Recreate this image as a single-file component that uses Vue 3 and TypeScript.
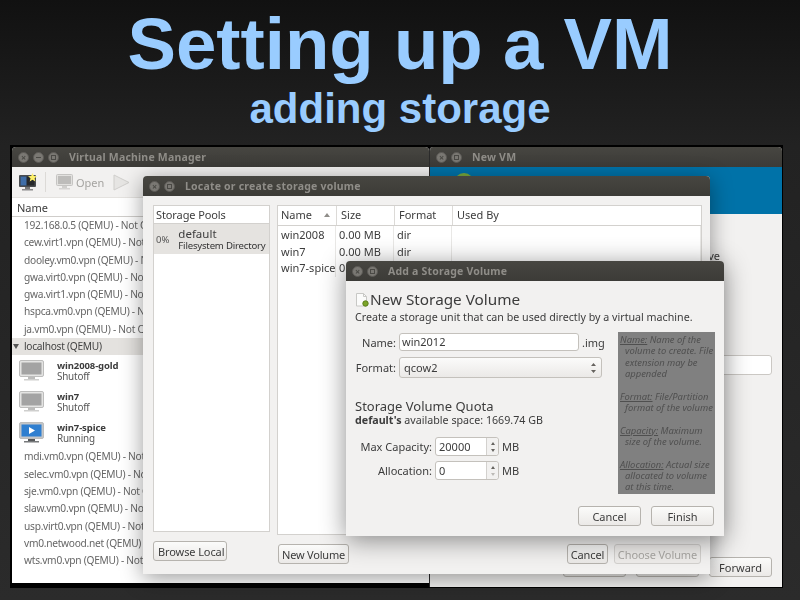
<script setup lang="ts">
interface Vm {
  name: string
  status: string
  running?: boolean
}

const hostsTop = [
  '192.168.0.5 (QEMU) - Not Connected',
  'cew.virt1.vpn (QEMU) - Not Connected',
  'dooley.vm0.vpn (QEMU) - Not Connected',
  'gwa.virt0.vpn (QEMU) - Not Connected',
  'gwa.virt1.vpn (QEMU) - Not Connected',
  'hspca.vm0.vpn (QEMU) - Not Connected',
  'ja.vm0.vpn (QEMU) - Not Connected',
]

const vms: Vm[] = [
  { name: 'win2008-gold', status: 'Shutoff' },
  { name: 'win7', status: 'Shutoff' },
  { name: 'win7-spice', status: 'Running', running: true },
]

const hostsBottom = [
  'mdi.vm0.vpn (QEMU) - Not Connected',
  'selec.vm0.vpn (QEMU) - Not Connected',
  'sje.vm0.vpn (QEMU) - Not Connected',
  'slaw.vm0.vpn (QEMU) - Not Connected',
  'usp.virt0.vpn (QEMU) - Not Connected',
  'vm0.netwood.net (QEMU) - Not Connected',
  'wts.vm0.vpn (QEMU) - Not Connected',
]

const volumes = [
  { name: 'win2008', size: '0.00 MB', format: 'dir' },
  { name: 'win7', size: '0.00 MB', format: 'dir' },
  { name: 'win7-spice', size: '0.00 MB', format: 'dir' },
]

const helpBlocks = [
  { label: 'Name', lines: [' Name of the', 'volume to create. File', 'extension may be', 'appended'] },
  { label: 'Format', lines: [' File/Partition', 'format of the volume'] },
  { label: 'Capacity', lines: [' Maximum', 'size of the volume.'] },
  { label: 'Allocation', lines: [' Actual size', 'allocated to volume', 'at this time.'] },
]
</script>

<template>
  <div class="slide">
    <header class="heading">
      <h1>Setting up a VM</h1>
      <h2>adding storage</h2>
    </header>

    <div class="desktop">
      <!-- main manager window -->
      <section class="win manager">
        <div class="titlebar">
          <span class="dot close"></span><span class="dot min"></span><span class="dot max"></span>
          <span class="wintitle">Virtual Machine Manager</span>
        </div>
        <div class="toolbar">
          <svg class="tool-new" width="20" height="18" viewBox="0 0 20 18">
            <rect x="1" y="2" width="17" height="12" rx="1" fill="#4a4d50" />
            <rect x="2.5" y="3.5" width="14" height="9" fill="#26282b" />
            <rect x="2.5" y="3.5" width="6" height="9" fill="#3f6ea8" />
            <rect x="7" y="14" width="5" height="2" fill="#777" />
            <rect x="4" y="16" width="11" height="1.5" fill="#8a8a8a" />
            <path d="M14.5 0l1.4 3 3.1.3-2.4 2 .8 3.1-2.9-1.7-2.8 1.7.8-3.1-2.4-2 3.1-.3z" fill="#fdf06a" />
          </svg>
          <span class="tool-sep"></span>
          <svg class="tool-open" width="17" height="16" viewBox="0 0 17 16">
            <rect x="0.5" y="0.5" width="16" height="11" rx="1" fill="#e2e1df" stroke="#c5c4c2" />
            <rect x="2" y="2" width="13" height="8" fill="#bdbcba" />
            <rect x="6" y="12" width="5" height="2" fill="#cfcecc" />
            <rect x="3" y="14" width="11" height="1.5" fill="#d5d4d2" />
          </svg>
          <span class="tool-label">Open</span>
          <svg class="tool-play" width="17" height="17" viewBox="0 0 17 17">
            <path d="M1 1l15 7.5L1 16z" fill="#e6e5e3" stroke="#cfcecb" />
          </svg>
        </div>
        <div class="list-head">Name</div>
        <div class="list">
          <div v-for="h in hostsTop" :key="h" class="host">{{ h }}</div>
          <div class="group"><span class="arrow"></span>localhost (QEMU)</div>
          <div v-for="vm in vms" :key="vm.name" class="vm">
            <svg width="25" height="21" viewBox="0 0 25 21">
              <rect x="0.5" y="0.5" width="24" height="16" rx="1.5" :fill="vm.running ? '#c4c6c8' : '#e4e4e3'" stroke="#bdbdbc" />
              <rect x="2.5" y="2.5" width="20" height="12" :fill="vm.running ? '#2f7fd0' : '#a3a3a3'" />
              <path v-if="vm.running" d="M10 5l6 3.5-6 3.5z" fill="#fff" />
              <rect x="9" y="17" width="7" height="2" :fill="vm.running ? '#55585a' : '#bcbcbb'" />
              <rect x="5" y="19" width="15" height="1.5" :fill="vm.running ? '#77797b' : '#cfcfce'" />
            </svg>
            <div class="vm-text">
              <div class="vm-name">{{ vm.name }}</div>
              <div class="vm-status">{{ vm.status }}</div>
            </div>
          </div>
          <div v-for="h in hostsBottom" :key="h" class="host">{{ h }}</div>
        </div>
      </section>

      <!-- new vm wizard behind the dialogs -->
      <section class="win newvm">
        <div class="titlebar">
          <span class="dot close"></span><span class="dot max"></span>
          <span class="wintitle">New VM</span>
        </div>
        <div class="banner">
          <span class="banner-icon"></span>
          <span class="banner-text">Create a new virtual machine</span>
        </div>
        <div class="newvm-body">
          <div class="newvm-line">Create a disk image on the computer's hard drive</div>
          <div class="newvm-input"></div>
          <div class="newvm-foot">
            <button class="btn fw">Cancel</button>
            <button class="btn fw">Back</button>
            <button class="btn fw">Forward</button>
          </div>
        </div>
      </section>

      <!-- locate storage dialog -->
      <section class="win locate">
        <div class="titlebar">
          <span class="dot close"></span><span class="dot max"></span>
          <span class="wintitle">Locate or create storage volume</span>
        </div>
        <div class="locate-body">
          <div class="pool-col">
            <div class="panel pools">
              <div class="col-head pool-head">Storage Pools</div>
              <div class="pool-row">
                <span class="pct">0%</span>
                <div>
                  <div class="pool-name">default</div>
                  <div class="pool-type">Filesystem Directory</div>
                </div>
              </div>
            </div>
            <button class="btn browse">Browse Local</button>
          </div>
          <div class="vol-col">
            <div class="panel volumes">
              <div class="vol-grid vol-head">
                <div class="col-head">Name<span class="sort"></span></div>
                <div class="col-head">Size</div>
                <div class="col-head">Format</div>
                <div class="col-head">Used By</div>
              </div>
              <div v-for="v in volumes" :key="v.name" class="vol-grid vol-row">
                <div>{{ v.name }}</div>
                <div>{{ v.size }}</div>
                <div>{{ v.format }}</div>
                <div></div>
              </div>
            </div>
            <div class="vol-foot">
              <button class="btn new-vol">New Volume</button>
              <span class="spacer"></span>
              <button class="btn cancel-vol">Cancel</button>
              <button class="btn choose-vol" disabled>Choose Volume</button>
            </div>
          </div>
        </div>
      </section>

      <!-- add volume dialog -->
      <section class="win addvol">
        <div class="titlebar">
          <span class="dot close"></span><span class="dot max"></span>
          <span class="wintitle">Add a Storage Volume</span>
        </div>
        <div class="add-body">
          <div class="add-main">
            <div class="add-title">
              <svg width="14" height="14" viewBox="0 0 14 14">
                <path d="M1.5.5h7l3 3v9.500h-10z" fill="#fbfbfa" stroke="#c8c8c5" />
                <path d="M8.500.5v3h3" fill="none" stroke="#c8c8c5" />
                <circle cx="10.500" cy="10.500" r="2.700" fill="#7ba428" stroke="#5c7f1c" />
              </svg>
              <span>New Storage Volume</span>
            </div>
            <p class="add-sub">Create a storage unit that can be used directly by a virtual machine.</p>
            <div class="form-row name-row">
              <label class="lbl">Name:</label>
              <div class="field name-field">win2012</div>
              <span>.img</span>
            </div>
            <div class="form-row format-row">
              <label class="lbl">Format:</label>
              <div class="combo">
                qcow2
                <svg width="7" height="12" viewBox="0 0 7 12"><path d="M3.500 1l2.500 3H1zM3.500 11L1 8h5z" fill="#66635f" /></svg>
              </div>
            </div>
            <h3 class="quota">Storage Volume Quota</h3>
            <p class="avail"><b>default's</b> available space: 1669.74 GB</p>
            <div class="form-row spin-row first">
              <label class="lbl wide">Max Capacity:</label>
              <div class="spin"><span class="spin-val">20000</span><span class="spin-btn"><i class="up"></i><i class="down"></i></span></div>
              <span>MB</span>
            </div>
            <div class="form-row spin-row">
              <label class="lbl wide">Allocation:</label>
              <div class="spin"><span class="spin-val">0</span><span class="spin-btn"><i class="up"></i><i class="down off"></i></span></div>
              <span>MB</span>
            </div>
          </div>
          <aside class="help">
            <div v-for="b in helpBlocks" :key="b.label" class="help-block">
              <div v-for="(line, i) in b.lines" :key="line" :class="{ indent: i > 0 }">
                <template v-if="i === 0"><u>{{ b.label }}:</u>{{ line }}</template>
                <template v-else>{{ line }}</template>
              </div>
            </div>
          </aside>
        </div>
        <div class="add-foot">
          <button class="btn fw">Cancel</button>
          <button class="btn fw">Finish</button>
        </div>
      </section>
    </div>
  </div>
</template>

<style scoped>
.slide {
  width: 800px;
  height: 600px;
  overflow: hidden;
  background: linear-gradient(#111111, #222222 145px, #2b2b2b);
  font-family: "Noto Sans", "Open Sans", sans-serif;
}

.heading {
  height: 145px;
  text-align: center;
  color: #99ccff;
  font-family: "Liberation Sans", Arial, sans-serif;
  font-weight: bold;
}

.heading h1 {
  margin: 0;
  padding-top: 2px;
  font-size: 72.7px;
  line-height: 84px;
}

.heading h2 {
  margin: 0;
  font-size: 42px;
  line-height: 46px;
}

.desktop {
  position: relative;
  margin-left: 10px;
  width: 773px;
  height: 443px;
  background: #000;
  color: #3c3c3c;
  font-size: 11px;
  filter: blur(0.3px);
}

.win {
  position: absolute;
  display: flex;
  flex-direction: column;
  background: #f2f1f0;
  border-radius: 4px 4px 0 0;
  overflow: hidden;
}

.titlebar {
  flex: none;
  height: 20px;
  display: flex;
  align-items: center;
  gap: 4px;
  padding-left: 6px;
  background: linear-gradient(#474641, #3c3b37);
  font-weight: bold;
  color: #8f8d88;
}

.dot {
  position: relative;
  width: 9px;
  height: 9px;
  border-radius: 50%;
  background: #7a7873;
  border: 1px solid #5c5a56;
  box-sizing: content-box;
}

.dot::after {
  content: "";
  position: absolute;
  box-sizing: border-box;
}

.close::after {
  content: "×";
  left: 0;
  top: 0;
  width: 9px;
  line-height: 9px;
  text-align: center;
  font-size: 9px;
  color: #4a4945;
}

.min::after {
  left: 2px;
  top: 4px;
  width: 5px;
  height: 1px;
  background: #4a4945;
}

.max::after {
  left: 2px;
  top: 2px;
  width: 5px;
  height: 5px;
  border: 1px solid #4a4945;
}

.wintitle {
  margin-left: 6px;
  font-size: 10.5px;
  letter-spacing: 0.2px;
  white-space: nowrap;
}

/* manager */
.manager {
  left: 2px;
  top: 2px;
  width: 417px;
  height: 436px;
  background: #fff;
}

.toolbar {
  flex: none;
  height: 30px;
  display: flex;
  align-items: center;
  padding-left: 6px;
  background: #f2f1f0;
}

.tool-sep {
  width: 1px;
  height: 20px;
  background: #dcdad7;
  margin: 0 10px 0 7px;
}

.tool-label {
  margin: 0 9px 0 3px;
  color: #a5a4a1;
  font-size: 11px;
}

.list-head {
  flex: none;
  height: 20px;
  line-height: 19px;
  padding-left: 5px;
  font-size: 11px;
  background: #fff;
  border-top: 1px solid #e4e2df;
  border-bottom: 1px solid #cfcdca;
  box-sizing: border-box;
}

.host {
  height: 17.3px;
  line-height: 17.3px;
  padding-left: 12px;
  font-size: 10.2px;
  letter-spacing: -0.27px;
  color: #666;
  white-space: nowrap;
}

.group {
  height: 17.3px;
  line-height: 17.3px;
  display: flex;
  align-items: center;
  font-size: 10.2px;
  letter-spacing: -0.27px;
  background: #e4e2df;
  color: #444;
  padding-left: 1px;
}

.arrow {
  width: 0;
  height: 0;
  margin-right: 5px;
  border-left: 3px solid transparent;
  border-right: 3px solid transparent;
  border-top: 5px solid #555;
}

.vm {
  height: 31px;
  display: flex;
  align-items: center;
  padding-left: 7px;
}

.vm-text {
  margin-left: 13px;
  padding-top: 1px;
  white-space: nowrap;
}

.vm-name {
  font-size: 9.5px;
  letter-spacing: -0.1px;
  font-weight: bold;
  line-height: 11.5px;
  color: #3c3c3c;
}

.vm-status {
  font-size: 9.9px;
  letter-spacing: -0.2px;
  line-height: 11.5px;
  color: #555;
}

/* wizard */
.newvm {
  left: 419px;
  top: 2px;
  width: 353px;
  height: 440px;
  border-left: 1px solid #2b2b2b;
  box-sizing: border-box;
}

.banner {
  flex: none;
  height: 47px;
  display: flex;
  align-items: flex-start;
  gap: 7px;
  padding: 6px 0 0 24px;
  box-sizing: border-box;
  background: #0072a8;
  color: #fff;
}

.banner-icon {
  width: 20px;
  height: 20px;
  border-radius: 50%;
  background: #78a83c;
}

.banner-text {
  margin-top: 1px;
  font-size: 15px;
  line-height: 18px;
  white-space: nowrap;
}

.newvm-body {
  flex: 1;
  display: flex;
  flex-direction: column;
  padding: 0 10px 10px 0;
}

.newvm-line {
  margin-top: 34px;
  text-align: right;
  padding-right: 52px;
  height: 15px;
  white-space: nowrap;
}

.newvm-input {
  margin: 92px 0 0 200px;
  height: 20px;
  background: #fff;
  border: 1px solid #cbc8c4;
  border-radius: 3px;
  box-sizing: border-box;
}

.newvm-foot {
  margin-top: auto;
  display: flex;
  justify-content: flex-end;
  gap: 10px;
}

/* locate dialog */
.locate {
  left: 133px;
  top: 31px;
  width: 567px;
  height: 398px;
  box-shadow: 0 4px 22px rgba(0, 0, 0, 0.4);
}

.locate-body {
  flex: 1;
  display: flex;
  gap: 7px;
  padding: 9px 8px 0 10px;
}

.panel {
  background: #fff;
  border: 1px solid #d3d1ce;
  box-sizing: border-box;
}

.pool-col {
  width: 117px;
  flex: none;
}

.pools {
  height: 327px;
}

.col-head {
  height: 19px;
  line-height: 18px;
  font-size: 11px;
  padding-left: 3px;
  white-space: nowrap;
  position: relative;
}

.pool-head {
  border-bottom: 1px solid #d3d1ce;
  box-sizing: content-box;
  height: 17px;
  padding-left: 2px;
  letter-spacing: -0.1px;
}

.pool-row {
  display: flex;
  align-items: center;
  height: 30px;
  background: #e5e3e0;
  padding-left: 2px;
  gap: 9px;
}

.pct {
  font-size: 9.5px;
  color: #555;
}

.pool-name {
  font-size: 11.5px;
  line-height: 13px;
}

.pool-type {
  font-size: 9.6px;
  letter-spacing: -0.2px;
  line-height: 11px;
  white-space: nowrap;
  color: #333;
}

.browse {
  margin-top: 9px;
  height: 22px;
  width: 74px;
  padding: 0;
  letter-spacing: -0.1px;
  display: block;
}

.vol-col {
  flex: 1;
  min-width: 0;
}

.volumes {
  height: 330px;
}

.vol-grid {
  display: grid;
  grid-template-columns: 58px 58px 58px 1fr;
}

.vol-head {
  border-bottom: 1px solid #d3d1ce;
}

.vol-head .col-head + .col-head {
  border-left: 1px solid #dcdad7;
  padding-left: 4px;
}

.vol-row {
  height: 16.5px;
  line-height: 17.5px;
  font-size: 11px;
  white-space: nowrap;
}

.vol-row > div {
  padding-left: 3px;
  border-right: 1px solid #e9e8e6;
}

.sort {
  position: absolute;
  right: 6px;
  top: 7px;
  border-left: 3px solid transparent;
  border-right: 3px solid transparent;
  border-bottom: 4px solid #8f8d89;
}

.vol-foot {
  display: flex;
  gap: 6px;
  margin-top: 9px;
  height: 20px;
  padding: 0 1px;
}

.spacer {
  flex: 1;
}

/* buttons */
.btn {
  height: 20px;
  padding: 0 4px;
  font: inherit;
  font-size: 11px;
  color: #3c3c3c;
  background: linear-gradient(#fbfbfa, #ebe9e7);
  border: 1px solid #b6b3ae;
  border-radius: 3px;
  white-space: nowrap;
}

.btn:disabled {
  color: #a9a7a3;
  background: #eeecea;
  border-color: #d3d1ce;
}

.fw {
  width: 63px;
}

.new-vol {
  width: 71px;
  padding: 0;
  letter-spacing: -0.2px;
}

.cancel-vol {
  width: 41px;
  padding: 0;
  letter-spacing: -0.1px;
}

.choose-vol {
  width: 87px;
  padding: 0;
  letter-spacing: -0.1px;
}

/* add volume dialog */
.addvol {
  left: 336px;
  top: 116px;
  width: 378px;
  height: 275px;
  box-shadow: 0 4px 26px rgba(0, 0, 0, 0.45);
}

.add-body {
  flex: 1;
  display: flex;
  padding: 9px 9px 0;
}

.add-main {
  flex: 1;
  min-width: 0;
}

.add-title {
  display: flex;
  align-items: center;
  gap: 1px;
  height: 20px;
  line-height: 18px;
  font-size: 15.3px;
}

.add-title span {
  margin-top: -2px;
}

.add-sub {
  margin: 0;
  height: 14px;
  line-height: 14px;
  font-size: 10.7px;
  white-space: nowrap;
}

.form-row {
  display: flex;
  align-items: center;
  gap: 3px;
}

.name-row {
  margin-top: 9px;
}

.format-row {
  margin-top: 6px;
}

.lbl {
  width: 41px;
  text-align: right;
}

.lbl.wide {
  width: 77px;
}

.field,
.combo,
.spin {
  font-size: 11px;
  background: #fff;
  border: 1px solid #c4c1bc;
  border-radius: 3px;
  box-sizing: border-box;
}

.name-field {
  width: 180px;
  height: 18px;
  line-height: 16px;
  padding-left: 2px;
}

.combo {
  width: 203px;
  height: 21px;
  padding: 0 4px;
  display: flex;
  align-items: center;
  justify-content: space-between;
  background: linear-gradient(#fbfbfa, #ebe9e7);
}

.quota {
  margin: 19px 0 0;
  height: 18px;
  line-height: 18px;
  font-size: 13px;
  font-weight: normal;
}

.avail {
  margin: -2px 0 0;
  height: 14px;
  line-height: 14px;
  font-size: 10.7px;
  white-space: nowrap;
}

.spin-row {
  margin-top: 5px;
}

.spin-row.first {
  margin-top: 10px;
}

.spin {
  width: 64px;
  height: 19px;
  display: flex;
  line-height: 17px;
}

.spin-val {
  flex: 1;
  padding-left: 3px;
}

.spin-btn {
  width: 11px;
  display: flex;
  flex-direction: column;
  align-items: center;
  justify-content: center;
  gap: 4px;
  border-left: 1px solid #d3d1ce;
  background: #f2f1f0;
  border-radius: 0 3px 3px 0;
}

.up,
.down {
  border-left: 2.500px solid transparent;
  border-right: 2.500px solid transparent;
}

.up {
  border-bottom: 3px solid #66635f;
}

.down {
  border-top: 3px solid #66635f;
}

.down.off {
  border-top-color: #bcbab6;
}

.help {
  flex: none;
  width: 97px;
  height: 162px;
  margin-top: 42px;
  padding: 2px 0 0 2px;
  box-sizing: border-box;
  background: #808080;
  color: #4f4f4f;
  font-size: 9.4px;
  font-style: italic;
  line-height: 11.35px;
  white-space: nowrap;
  overflow: hidden;
}

.help-block {
  margin-bottom: 11.35px;
}

.indent {
  padding-left: 5px;
}

.add-foot {
  display: flex;
  justify-content: flex-end;
  gap: 10px;
  padding: 0 10px 10px 0;
}
</style>
